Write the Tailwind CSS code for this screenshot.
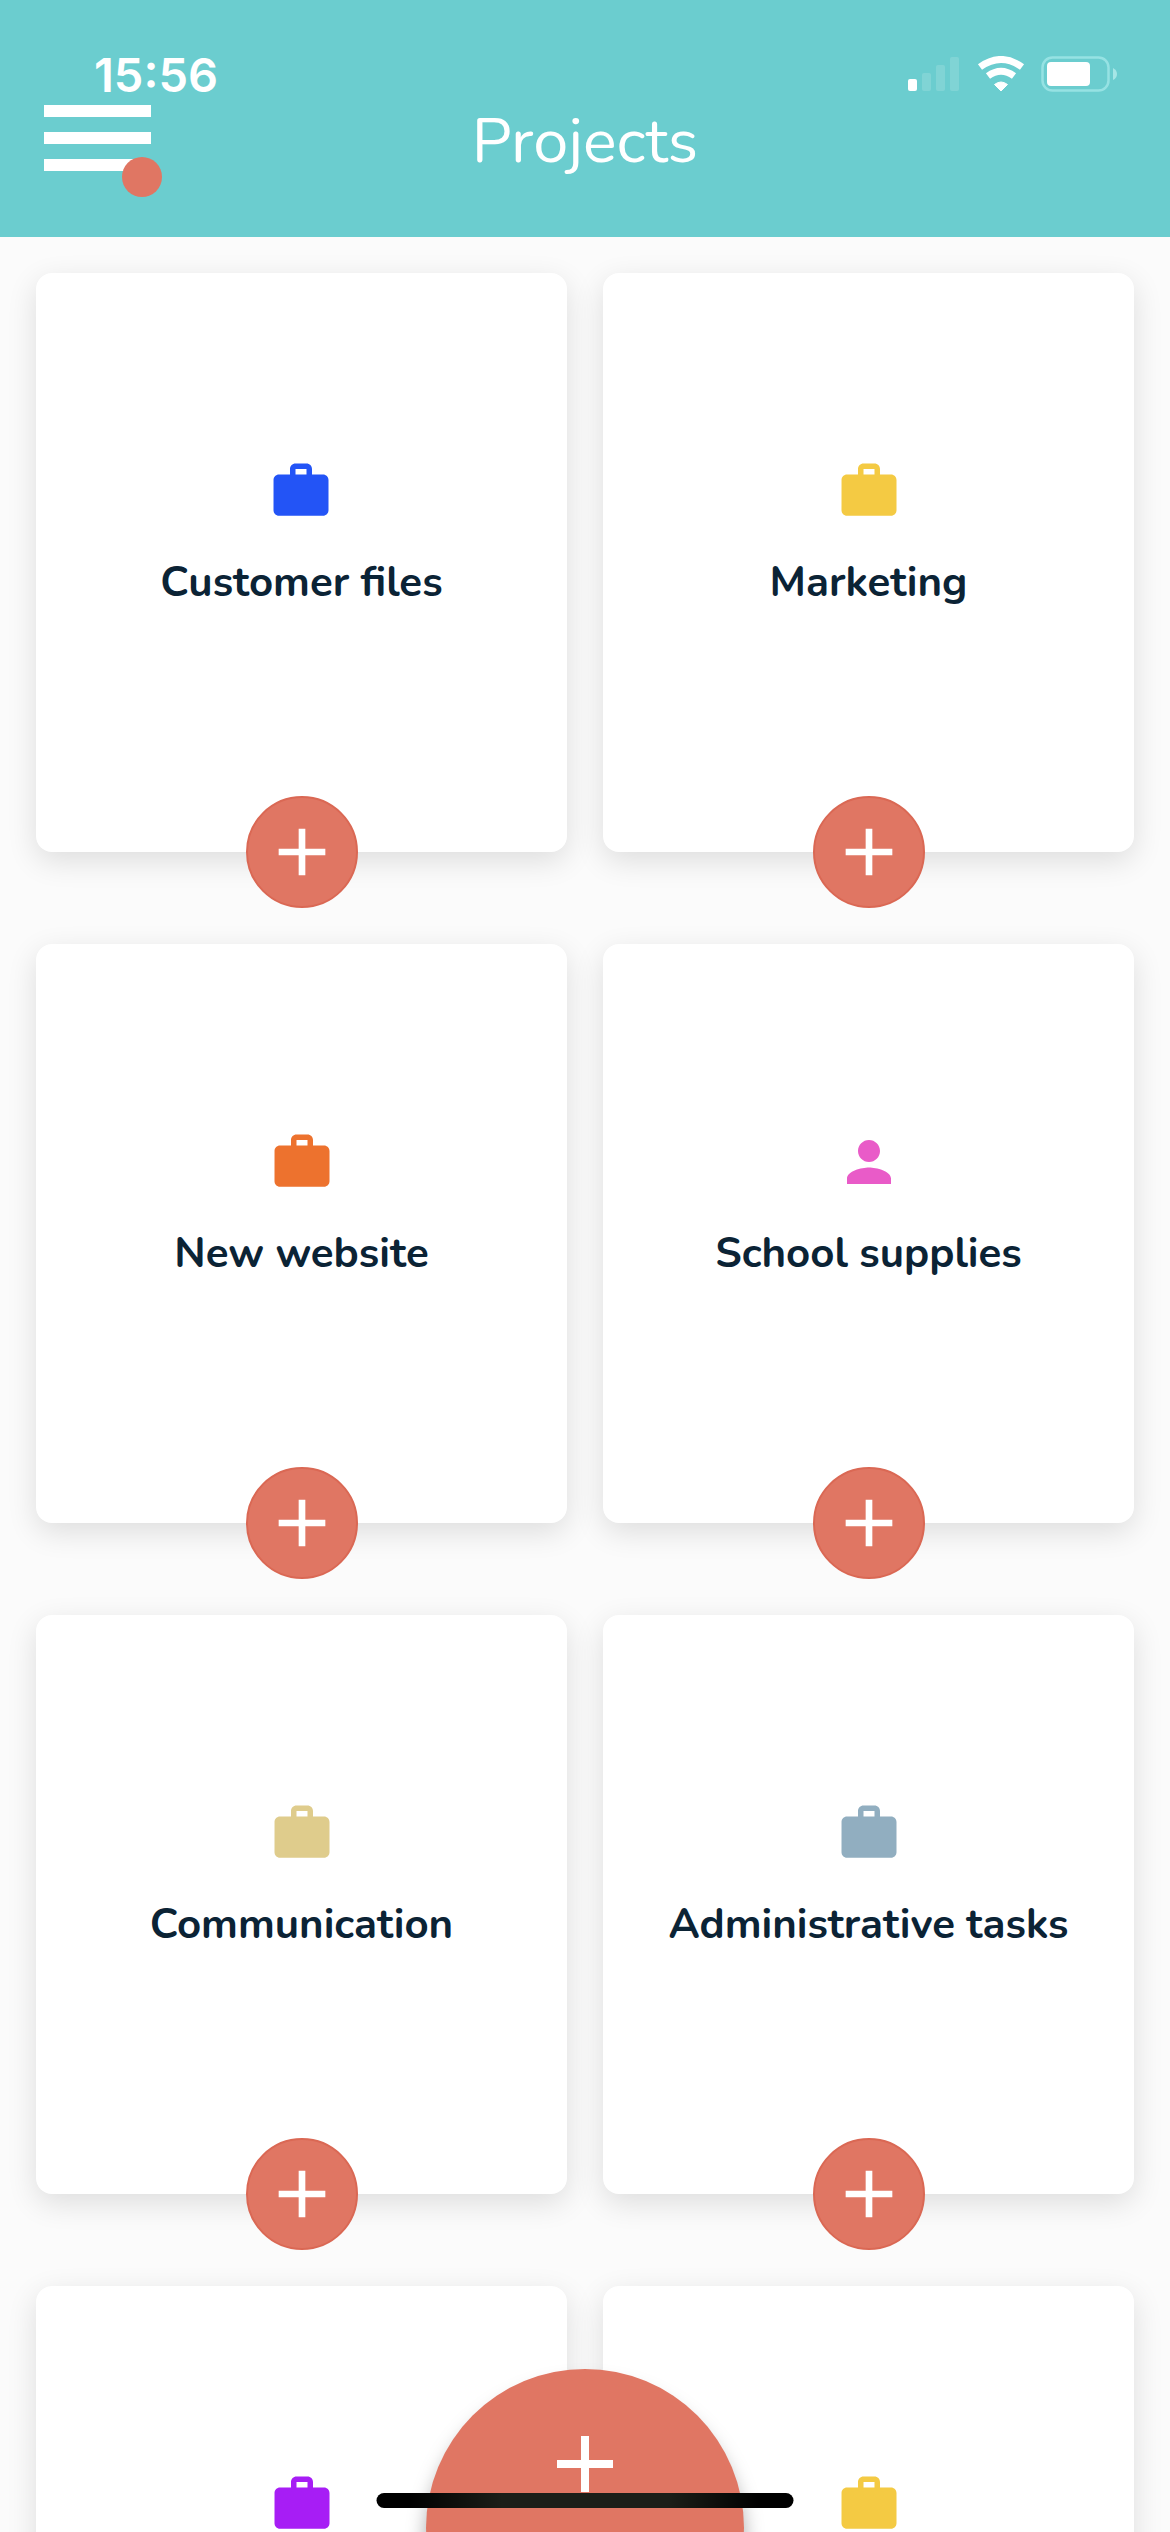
<!DOCTYPE html>
<html lang="en">
<head>
<meta charset="utf-8">
<meta name="viewport" content="width=device-width, initial-scale=1">
<title>Projects</title>
<script src="https://cdn.jsdelivr.net/npm/@tailwindcss/browser@4"></script>
</head>
<body class="flex h-screen flex-col overflow-hidden bg-[#fbfbfb] font-['Nunito','Open_Sans',sans-serif] text-[#0b2335]">
<svg class="hidden" aria-hidden="true">
  <symbol id="work" viewBox="0 0 24 24"><path d="M20 6h-4V4c0-1.110-.89-2-2-2h-4c-1.110 0-2 .89-2 2v2H4c-1.110 0-1.990.89-1.990 2L2 19c0 1.110.89 2 2 2h16c1.110 0 2-.89 2-2V8c0-1.110-.89-2-2-2zm-6 0h-4V4h4v2z"/></symbol>
  <symbol id="person" viewBox="0 0 24 24"><path d="M12 12c2.210 0 4-1.790 4-4s-1.790-4-4-4-4 1.790-4 4 1.790 4 4 4zm0 2c-2.670 0-8 1.340-8 4v2h16v-2c0-2.660-5.330-4-8-4z"/></symbol>
  <symbol id="add" viewBox="0 0 24 24"><path d="M19 13h-6v6h-2v-6H5v-2h6V5h2v6h6v2z"/></symbol>
</svg>

<header class="shrink-0 bg-[#6bcdcf] pb-10 text-white">
  <div class="flex h-[105px] items-end justify-between pr-[51px] pl-[94px]">
    <time class="font-['Inter',sans-serif] text-[47px] leading-[60px] font-semibold">15:56</time>
    <div class="flex items-end gap-4 pb-[13px]">
      <svg class="h-9 w-[54px]" viewBox="0 0 54 36" fill="currentColor" aria-label="Signal">
        <rect x="1" y="23" width="9" height="12" rx="2"/>
        <g opacity=".14"><rect x="15" y="17" width="9" height="18" rx="2"/><rect x="29" y="9" width="9" height="26" rx="2"/><rect x="43" y="1" width="9" height="34" rx="2"/></g>
      </svg>
      <svg class="h-9 w-12" viewBox="0 0 48 36" fill="none" stroke="currentColor" aria-label="Wi-Fi">
        <path d="M3 11Q24 -4 45 11" stroke-width="7"/>
        <path d="M11 20Q24 10.500 37 20" stroke-width="7"/>
        <path d="M17.500 28.500Q24 23.500 30.500 28.500L24 35z" fill="currentColor" stroke-width="1" stroke-linejoin="round"/>
      </svg>
      <svg class="h-9 w-[78px]" viewBox="0 0 78 36" fill="currentColor" aria-label="Battery">
        <rect x="1.500" y="1.500" width="66" height="33" rx="10" fill="none" stroke="#96e2e3" stroke-width="2.500"/>
        <rect x="6" y="6" width="43" height="24" rx="4"/>
        <path d="M72 12q4 2 4 6t-4 6z" fill="#a6e6e6"/>
      </svg>
    </div>
  </div>
  <nav class="grid grid-cols-3 items-start px-11">
    <button type="button" aria-label="Menu" class="relative flex h-[92px] w-[118px] flex-col gap-[15px]">
      <span class="h-3 w-[107px] bg-white"></span>
      <span class="h-3 w-[107px] bg-white"></span>
      <span class="h-3 w-[107px] bg-white"></span>
      <span class="absolute right-0 bottom-0 size-10 rounded-full bg-[#e07663]"></span>
    </button>
    <h1 class="text-center text-[63px] leading-[72px] font-normal">Projects</h1>
  </nav>
</header>

<main class="flex-1 overflow-y-auto px-9 py-9 [scrollbar-width:none]">
  <ul class="grid grid-cols-2 gap-x-9 gap-y-[92px]">
    <li class="flex h-[579px] flex-col items-center justify-between rounded-2xl bg-white pt-[185px] shadow-[0_9px_30px_rgba(0,0,0,0.12)]">
      <a href="#" class="flex flex-col items-center gap-[29px]"><svg class="size-[66px] fill-[#2354f6]"><use href="#work"/></svg><span class="text-[42px] leading-[60px] font-bold">Customer files</span></a>
      <button type="button" aria-label="Add to Customer files" class="-mb-14 flex size-28 items-center justify-center rounded-full border-2 border-[#da6854] bg-[#e07663]"><svg class="size-20 fill-white"><use href="#add"/></svg></button>
    </li>
    <li class="flex h-[579px] flex-col items-center justify-between rounded-2xl bg-white pt-[185px] shadow-[0_9px_30px_rgba(0,0,0,0.12)]">
      <a href="#" class="flex flex-col items-center gap-[29px]"><svg class="size-[66px] fill-[#f4ca43]"><use href="#work"/></svg><span class="text-[42px] leading-[60px] font-bold">Marketing</span></a>
      <button type="button" aria-label="Add to Marketing" class="-mb-14 flex size-28 items-center justify-center rounded-full border-2 border-[#da6854] bg-[#e07663]"><svg class="size-20 fill-white"><use href="#add"/></svg></button>
    </li>
    <li class="flex h-[579px] flex-col items-center justify-between rounded-2xl bg-white pt-[185px] shadow-[0_9px_30px_rgba(0,0,0,0.12)]">
      <a href="#" class="flex flex-col items-center gap-[29px]"><svg class="size-[66px] fill-[#ed722e]"><use href="#work"/></svg><span class="text-[42px] leading-[60px] font-bold">New website</span></a>
      <button type="button" aria-label="Add to New website" class="-mb-14 flex size-28 items-center justify-center rounded-full border-2 border-[#da6854] bg-[#e07663]"><svg class="size-20 fill-white"><use href="#add"/></svg></button>
    </li>
    <li class="flex h-[579px] flex-col items-center justify-between rounded-2xl bg-white pt-[185px] shadow-[0_9px_30px_rgba(0,0,0,0.12)]">
      <a href="#" class="flex flex-col items-center gap-[29px]"><svg class="size-[66px] fill-[#e95bc8]"><use href="#person"/></svg><span class="text-[42px] leading-[60px] font-bold">School supplies</span></a>
      <button type="button" aria-label="Add to School supplies" class="-mb-14 flex size-28 items-center justify-center rounded-full border-2 border-[#da6854] bg-[#e07663]"><svg class="size-20 fill-white"><use href="#add"/></svg></button>
    </li>
    <li class="flex h-[579px] flex-col items-center justify-between rounded-2xl bg-white pt-[185px] shadow-[0_9px_30px_rgba(0,0,0,0.12)]">
      <a href="#" class="flex flex-col items-center gap-[29px]"><svg class="size-[66px] fill-[#dfcc8c]"><use href="#work"/></svg><span class="text-[42px] leading-[60px] font-bold">Communication</span></a>
      <button type="button" aria-label="Add to Communication" class="-mb-14 flex size-28 items-center justify-center rounded-full border-2 border-[#da6854] bg-[#e07663]"><svg class="size-20 fill-white"><use href="#add"/></svg></button>
    </li>
    <li class="flex h-[579px] flex-col items-center justify-between rounded-2xl bg-white pt-[185px] shadow-[0_9px_30px_rgba(0,0,0,0.12)]">
      <a href="#" class="flex flex-col items-center gap-[29px]"><svg class="size-[66px] fill-[#91aec0]"><use href="#work"/></svg><span class="text-[42px] leading-[60px] font-bold">Administrative tasks</span></a>
      <button type="button" aria-label="Add to Administrative tasks" class="-mb-14 flex size-28 items-center justify-center rounded-full border-2 border-[#da6854] bg-[#e07663]"><svg class="size-20 fill-white"><use href="#add"/></svg></button>
    </li>
    <li class="flex h-[579px] flex-col items-center rounded-2xl bg-white pt-[185px] shadow-[0_9px_30px_rgba(0,0,0,0.12)]">
      <svg class="size-[66px] fill-[#a71df5]"><use href="#work"/></svg>
    </li>
    <li class="flex h-[579px] flex-col items-center rounded-2xl bg-white pt-[185px] shadow-[0_9px_30px_rgba(0,0,0,0.12)]">
      <svg class="size-[66px] fill-[#f4ca43]"><use href="#work"/></svg>
    </li>
  </ul>
</main>

<button type="button" aria-label="New project" class="fixed -bottom-[155px] left-1/2 flex size-[318px] -translate-x-1/2 justify-center rounded-full bg-[#e07663] pt-[47px] shadow-[0_16px_20px_rgba(0,0,0,0.35)]"><svg class="size-24 fill-white"><use href="#add"/></svg></button>
<div class="fixed bottom-6 left-1/2 h-[15px] w-[417px] -translate-x-1/2 rounded-full bg-[linear-gradient(to_right,#000_8%,#1c1e18_30%,#1c1e18_70%,#000_92%)]"></div>
</body>
</html>
